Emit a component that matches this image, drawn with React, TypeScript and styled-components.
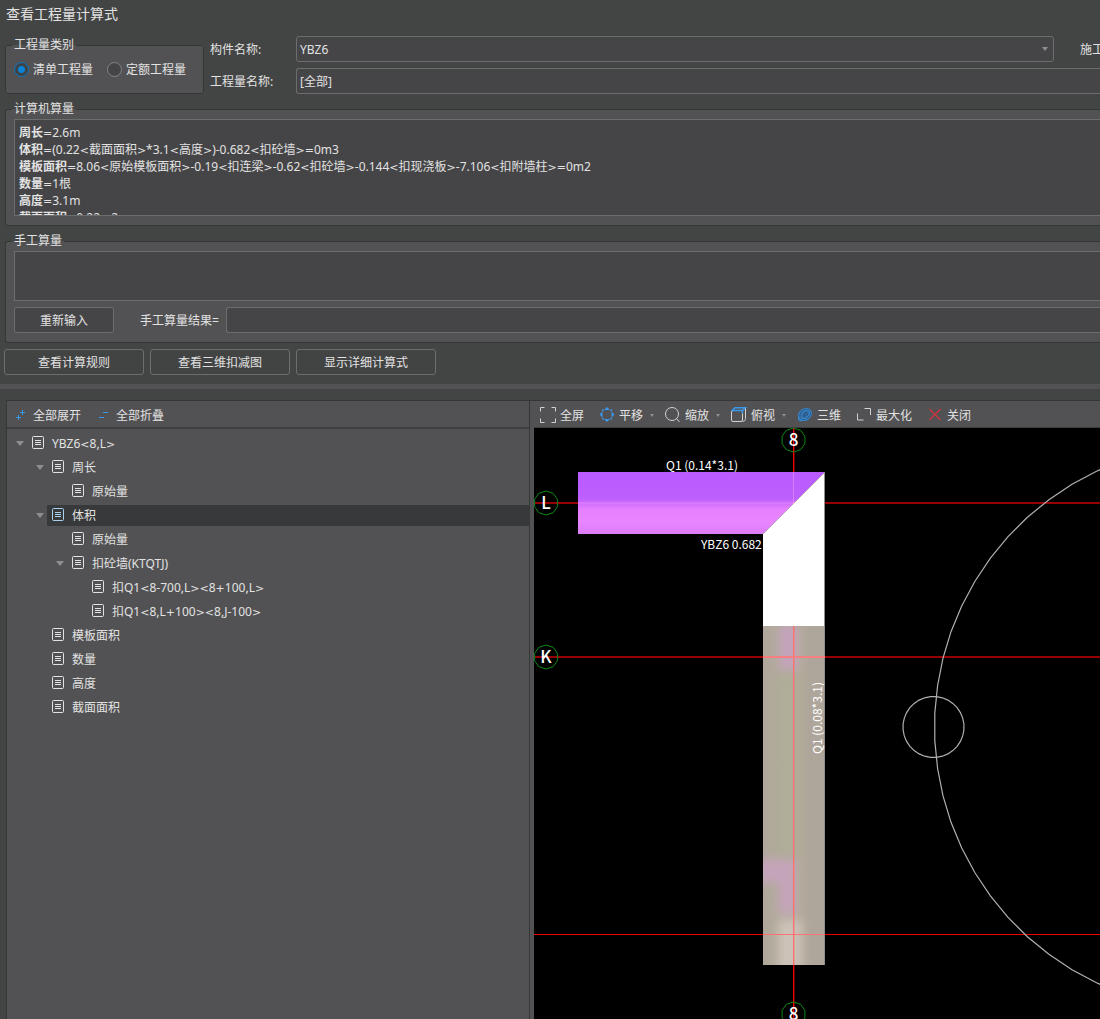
import React from "react";
import styled, { createGlobalStyle, css } from "styled-components";

const GlobalStyle = createGlobalStyle`
  *, *::before, *::after { box-sizing: border-box; }
  body {
    margin: 0;
    background: #434544;
    color: #e2e2e2;
    font: 12px/16px "Noto Sans", "Noto Sans CJK SC", sans-serif;
    overflow-x: hidden;
  }
  button, input, select, textarea { font: inherit; color: inherit; }
`;

const line = "#6c6e6e";
const edge = "#353736";
const fieldBg = "#454547";
const panelBg = "#525254";

const Window = styled.main`
  display: flex;
  flex-direction: column;
  min-height: 100vh;
`;

const Title = styled.h1`
  margin: 0;
  padding: 0 6px;
  height: 36px;
  font-size: 14px;
  font-weight: 400;
  line-height: 28px;
`;

const Form = styled.form`
  display: flex;
  flex-direction: column;
  padding: 0 0 9px 5px;
`;

const Header = styled.div`
  display: flex;
  align-items: flex-end;
  gap: 6px;
`;

const Group = styled.fieldset<{ $open?: boolean }>`
  min-width: 0;
  margin: 0;
  padding: 0 17px 9px 8px;
  border: 1px solid ${edge};
  border-radius: 3px;
  background: ${panelBg};
  ${(p) =>
    p.$open &&
    css`
      margin-top: 7px;
      padding: 1px 0 9px 8px;
      border-right: 0;
      border-radius: 3px 0 0 3px;
    `}
`;

const Legend = styled.legend`
  margin-left: -2px;
  padding: 0 2px 2px;
  line-height: 15px;
`;

const Radios = styled.div`
  display: flex;
  align-items: center;
  gap: 14px;
  height: 30px;
`;

const RadioLabel = styled.label`
  display: flex;
  align-items: center;
  gap: 4px;
  white-space: nowrap;
`;

const Text = styled.span`
  padding-top: 2px;
`;

const Radio = styled.input.attrs({ type: "radio" })`
  appearance: none;
  width: 15px;
  height: 15px;
  margin: 0;
  border: 1px solid #858585;
  border-radius: 50%;
  background: ${fieldBg};
  &:checked {
    border-color: #0a78c4;
    background: radial-gradient(circle, #0a84d8 3px, #3f4345 4px);
  }
`;

const Fields = styled.div`
  flex: 1;
  min-width: 0;
  display: flex;
  flex-direction: column;
  gap: 6px;
`;

const FieldRow = styled.div`
  display: flex;
  align-items: center;
`;

const FieldLabel = styled.label`
  flex: 0 0 86px;
  padding-top: 2px;
`;

const Cut = styled.span`
  flex: 0 0 46px;
  padding: 2px 0 0 26px;
  overflow: hidden;
  white-space: nowrap;
`;

const SelectBox = styled.span<{ $open?: boolean }>`
  position: relative;
  flex: 1;
  min-width: 0;
  display: flex;
  select {
    appearance: none;
    width: 100%;
    height: 26px;
    padding: 2px 3px 0;
    border: 1px solid ${line};
    border-radius: 3px;
    background: ${fieldBg};
    ${(p) => p.$open && "border-right: 0; border-radius: 3px 0 0 3px;"}
  }
`;

const Caret = styled.i<{ $over?: boolean; $size?: number }>`
  width: 0;
  height: 0;
  border: ${(p) => p.$size ?? 3}px solid transparent;
  border-top: ${(p) => (p.$size ?? 3) + 1}px solid #8f8f8f;
  border-bottom: 0;
  ${(p) => p.$over && "position: absolute; right: 6px; top: 11px;"}
`;

const Report = styled.div`
  height: 97px;
  padding: 4px;
  border: 1px solid ${line};
  border-right: 0;
  background: ${fieldBg};
  overflow: hidden;
`;

const ReportLine = styled.p`
  margin: 0;
  line-height: 17px;
  white-space: nowrap;
`;

const Symbol = styled.span`
  font-family: "DejaVu Sans", sans-serif;
  font-size: 11px;
  line-height: 1px;
`;

const Manual = styled.textarea`
  display: block;
  width: 100%;
  height: 50px;
  padding: 4px;
  border: 1px solid ${line};
  border-right: 0;
  background: ${fieldBg};
  resize: none;
`;

const ManualRow = styled.div`
  display: flex;
  align-items: center;
  gap: 7px;
  margin-top: 6px;
`;

const ResultLabel = styled.label`
  margin-left: 19px;
  padding-top: 2px;
`;

const Result = styled.input`
  flex: 1;
  min-width: 0;
  height: 26px;
  border: 1px solid ${line};
  border-right: 0;
  border-radius: 3px 0 0 3px;
  background: ${fieldBg};
`;

const Button = styled.button<{ $wide?: boolean }>`
  width: ${(p) => (p.$wide ? 140 : 100)}px;
  height: 26px;
  padding: 2px 0 0;
  border: 1px solid ${line};
  border-radius: 3px;
  background: ${(p) => (p.$wide ? "#424443" : fieldBg)};
`;

const Actions = styled.div`
  display: flex;
  gap: 6px;
  margin: 6px 0 0 -1px;
`;

const Splitter = styled.div`
  height: 5px;
  background: ${panelBg};
`;

const Body = styled.div`
  flex: 1;
  display: grid;
  grid-template-columns: 524px 4px minmax(0, 1fr);
  padding: 11px 0 0 6px;
`;

const TreePanel = styled.section`
  display: flex;
  flex-direction: column;
  border: 1px solid ${edge};
  border-bottom: 0;
  background: ${panelBg};
`;

const Divider = styled.div`
  border-top: 1px solid ${edge};
  background: ${panelBg};
`;

const ViewPanel = styled.section`
  display: flex;
  flex-direction: column;
  min-width: 0;
  border-top: 1px solid ${edge};
  background: #000;
`;

const Toolbar = styled.div<{ $tree?: boolean }>`
  display: flex;
  align-items: center;
  gap: ${(p) => (p.$tree ? 18 : 11)}px;
  height: ${(p) => (p.$tree ? 28 : 27)}px;
  padding: 0 8px;
  padding-left: ${(p) => (p.$tree ? 9 : 6)}px;
  border-bottom: ${(p) => (p.$tree ? 2 : 1)}px solid #3d3f3f;
  background: ${panelBg};
`;

const Tool = styled.button<{ $gap: number; $plain?: boolean }>`
  display: flex;
  align-items: center;
  gap: ${(p) => p.$gap}px;
  padding: 2px 0 0;
  padding-right: ${(p) => (p.$plain ? 4 : 0)}px;
  border: 0;
  background: none;
  white-space: nowrap;
  svg { display: block; flex: none; }
  i { margin-left: 3px; }
`;

const Tree = styled.ul`
  margin: 0;
  padding: 2px 0 0;
  list-style: none;
`;

const Node = styled.li<{ $level: number }>`
  display: flex;
  align-items: center;
  height: 24px;
  padding-left: ${(p) => 9 + p.$level * 20}px;
`;

const Twist = styled.span`
  flex: 0 0 11px;
  display: flex;
`;

const NodeLabel = styled.span<{ $selected?: boolean }>`
  flex: 1;
  display: flex;
  align-items: center;
  gap: 8px;
  height: 21px;
  padding-left: 5px;
  color: #e2e2e2;
  background: ${(p) => (p.$selected ? "#38393a" : "none")};
  svg { color: ${(p) => (p.$selected ? "#a9d0f0" : "#e2e2e2")}; }
`;

const Canvas = styled.svg`
  display: block;
  flex: 1;
  width: 100%;
  min-height: 560px;
  font-family: "Noto Sans CJK SC", sans-serif;
  font-size: 12px;
  fill: #fff;
`;

/* Operators and angle brackets are set wider than the digits around them. */
const Expr = ({ children }: { children: string }) => (
  <Text>
    {children
      .split(/([<>=+]+)/)
      .map((s, i) => (i % 2 ? <Symbol key={i}>{s}</Symbol> : s))}
  </Text>
);

const report: [string, string][] = [
  ["周长", "=2.6m"],
  ["体积", "=(0.22<截面面积>*3.1<高度>)-0.682<扣砼墙>=0m3"],
  ["模板面积", "=8.06<原始模板面积>-0.19<扣连梁>-0.62<扣砼墙>-0.144<扣现浇板>-7.106<扣附墙柱>=0m2"],
  ["数量", "=1根"],
  ["高度", "=3.1m"],
  ["截面面积", "=0.22m2"],
];

const nodes: { level: number; text: string; open?: boolean; selected?: boolean }[] = [
  { level: 0, text: "YBZ6<8,L>", open: true },
  { level: 1, text: "周长", open: true },
  { level: 2, text: "原始量" },
  { level: 1, text: "体积", open: true, selected: true },
  { level: 2, text: "原始量" },
  { level: 2, text: "扣砼墙(KTQTJ)", open: true },
  { level: 3, text: "扣Q1<8-700,L><8+100,L>" },
  { level: 3, text: "扣Q1<8,L+100><8,J-100>" },
  { level: 1, text: "模板面积" },
  { level: 1, text: "数量" },
  { level: 1, text: "高度" },
  { level: 1, text: "截面面积" },
];

const DocIcon = () => (
  <svg width="12" height="14" viewBox="0 0 12 14" fill="none" stroke="currentColor">
    <rect x="0.5" y="0.5" width="11" height="12" rx="1" />
    <path d="M3 4.5h6M3 6.5h6M3 8.5h6" />
  </svg>
);

const blue = "#3b97ea";
const grey = "#d2d2d2";

const icons = {
  full: (
    <path
      stroke={grey}
      d="M.5 4.500v-4h4M11.500.5h4v4M15.500 11.500v4h-4M4.500 15.500h-4v-4"
    />
  ),
  pan: (
    <>
      <path fill={blue} d="M8 0l3 3H5zM8 15l3-3H5zM.5 7.500l3-3v6zM15.500 7.500l-3-3v6z" />
      <path fill={blue} d="M3 2.500h2v1H4v1H3zM13 2.500h-2v1h1v1h1zM3 12.500h2v-1H4v-1H3zM13 12.500h-2v-1h1v-1h1z" />
    </>
  ),
  zoom: (
    <>
      <circle cx="7" cy="7" r="6.500" stroke={grey} />
      <path stroke={grey} d="M11.500 11.500l3 3.500" />
    </>
  ),
  view: (
    <>
      <rect x="0.5" y="3.500" width="11" height="11" rx="1.500" stroke={grey} />
      <path stroke={grey} d="M11.500 14.500c2 0 3-1.500 3-3V1" />
      <path stroke={blue} strokeWidth="1.400" d="M1 3.500L4 .7h10.500l-3 2.800zM11.500 3.500v3" />
    </>
  ),
  solid: (
    <>
      <ellipse cx="8" cy="7.500" rx="7" ry="5.500" stroke="#3385d0" fill="#2f6293" transform="rotate(-35 8 7.500)" />
      <path stroke="#3b8fdd" d="M5.500 5.500L9 3.500l3.500 1-.5 3.500-3 3-4 .5-.5-3zM2 10l-.5 3 3.500 1" />
    </>
  ),
  max: <path stroke={grey} d="M1.500 6.500v6.500h6M8.500 1.500h6v6.500" />,
  close: <path stroke="#d3333d" strokeWidth="1.200" d="M2.500 2l11 11M13.500 2l-11 11" />,
};

const tools: { icon: keyof typeof icons; text: string; menu?: boolean }[] = [
  { icon: "full", text: "全屏" },
  { icon: "pan", text: "平移", menu: true },
  { icon: "zoom", text: "缩放", menu: true },
  { icon: "view", text: "俯视", menu: true },
  { icon: "solid", text: "三维" },
  { icon: "max", text: "最大化" },
  { icon: "close", text: "关闭" },
];

/* Regular polygon with a flat side facing left, as the CAD view tessellates arcs. */
const ring = (cx: number, cy: number, r: number, n: number) =>
  Array.from({ length: n }, (_, i) => {
    const a = ((i + 0.5) * 2 * Math.PI) / n;
    return `${(cx + r * Math.cos(a)).toFixed(1)},${(cy + r * Math.sin(a)).toFixed(1)}`;
  }).join(" ");

const Axis = ({ x, y, name }: { x: number; y: number; name: string }) => (
  <g>
    <polygon points={ring(x, y, 12, 10)} fill="none" stroke="#0a8a14" />
    <text x={x} y={y + 6} fontSize="17" fontWeight="500" textAnchor="middle">
      {name}
    </text>
  </g>
);

const Drawing = () => (
  <Canvas role="img" aria-label="俯视图">
    <defs>
      <linearGradient id="wall" x1="0" y1="0" x2="0" y2="1">
        <stop offset="0" stopColor="#b95bff" />
        <stop offset="0.420" stopColor="#bd5efe" />
        <stop offset="0.600" stopColor="#e680ff" />
        <stop offset="0.800" stopColor="#e985ff" />
        <stop offset="1" stopColor="#dd7cf8" />
      </linearGradient>
      <linearGradient id="column">
        <stop offset="0" stopColor="#b1a79d" />
        <stop offset="0.350" stopColor="#b0ad98" />
        <stop offset="0.600" stopColor="#b1ab99" />
        <stop offset="0.750" stopColor="#afa69b" />
        <stop offset="1" stopColor="#afa69b" />
      </linearGradient>
      <filter id="soft" x="-50%" y="-50%" width="200%" height="200%">
        <feGaussianBlur stdDeviation="5" />
      </filter>
      <clipPath id="columnClip">
        <rect x="229" y="198" width="62" height="339" />
      </clipPath>
    </defs>
    <rect x="0" y="74" width="100%" height="2" fill="#960000" />
    <rect x="0" y="228" width="100%" height="2" fill="#960000" />
    <rect x="0" y="506" width="100%" height="1" fill="#f00000" />
    <rect x="259" y="0" width="1.400" height="100%" fill="#f00000" />
    <polygon points="44,44 291,44 229,106 44,106" fill="url(#wall)" />
    <path d="M44 75h216M259.500 44v31" stroke="#f3a0ff" strokeOpacity="0.500" />
    <polygon points="291,44 291,198 229,198 229,106" />
    <rect x="229" y="198" width="62" height="339" fill="url(#column)" />
    <g clipPath="url(#columnClip)">
      <g filter="url(#soft)">
        <rect x="245" y="196" width="19" height="46" fill="#c4a3bb" />
        <path d="M222 431h40v56h-18v-32h-22z" fill="#c4a4ba" />
        <rect x="244" y="492" width="24" height="52" fill="#cdc2b9" />
      </g>
    </g>
    <path d="M290.500 44v493" stroke="#8e8e8e" />
    <rect x="259" y="198" width="1.400" height="339" fill="#ff7272" />
    <rect x="229" y="228" width="62" height="2" fill="#f98080" />
    <rect x="229" y="506" width="62" height="1" fill="#ff7272" />
    <text x="132" y="42">Q1 (0.14*3.1)</text>
    <text x="167" y="121">YBZ6 0.682</text>
    <text transform="translate(288 326) rotate(-90)">Q1 (0.08*3.1)</text>
    <g fill="none" stroke="#b0b0b0" strokeWidth="1.200">
      <polygon points={ring(683.5, 299, 283, 64)} />
      <polygon points={ring(399.5, 299, 30.5, 32)} />
    </g>
    <Axis x={259.5} y={12} name="8" />
    <Axis x={12} y={75} name="L" />
    <Axis x={12} y={229} name="K" />
    <Axis x={259.5} y={586} name="8" />
  </Canvas>
);

export default function App() {
  return (
    <Window>
      <GlobalStyle />
      <Title>查看工程量计算式</Title>
      <Form onSubmit={(e) => e.preventDefault()}>
        <Header>
          <Group>
            <Legend>工程量类别</Legend>
            <Radios>
              <RadioLabel>
                <Radio name="kind" defaultChecked />
                <Text>清单工程量</Text>
              </RadioLabel>
              <RadioLabel>
                <Radio name="kind" />
                <Text>定额工程量</Text>
              </RadioLabel>
            </Radios>
          </Group>
          <Fields>
            <FieldRow>
              <FieldLabel htmlFor="part">构件名称:</FieldLabel>
              <SelectBox>
                <select id="part">
                  <option>YBZ6</option>
                </select>
                <Caret $over $size={3} />
              </SelectBox>
              <Cut>施工</Cut>
            </FieldRow>
            <FieldRow>
              <FieldLabel htmlFor="quantity">工程量名称:</FieldLabel>
              <SelectBox $open>
                <select id="quantity">
                  <option>[全部]</option>
                </select>
              </SelectBox>
            </FieldRow>
          </Fields>
        </Header>

        <Group $open>
          <Legend>计算机算量</Legend>
          <Report>
            {report.map(([name, value]) => (
              <ReportLine key={name}>
                <b>{name}</b>
                <Expr>{value}</Expr>
              </ReportLine>
            ))}
          </Report>
        </Group>

        <Group $open>
          <Legend>手工算量</Legend>
          <Manual aria-label="手工算量" />
          <ManualRow>
            <Button type="reset">重新输入</Button>
            <ResultLabel htmlFor="result">手工算量结果=</ResultLabel>
            <Result id="result" />
          </ManualRow>
        </Group>

        <Actions>
          <Button type="button" $wide>查看计算规则</Button>
          <Button type="button" $wide>查看三维扣减图</Button>
          <Button type="button" $wide>显示详细计算式</Button>
        </Actions>
      </Form>

      <Splitter />

      <Body>
        <TreePanel>
          <Toolbar $tree>
            <Tool type="button" $gap={7}>
              <svg width="10" height="10" stroke={blue}>
                <path d="M0 7.500h5M2.500 5v5M4 2.500h5M6.500 0v5" />
              </svg>
              <Text>全部展开</Text>
            </Tool>
            <Tool type="button" $gap={7}>
              <svg width="10" height="10" stroke={blue}>
                <path d="M0 7.500h5M4 2.500h5" />
              </svg>
              <Text>全部折叠</Text>
            </Tool>
          </Toolbar>
          <Tree role="tree">
            {nodes.map((n, i) => (
              <Node key={i} $level={n.level} role="treeitem" aria-level={n.level + 1} aria-selected={!!n.selected}>
                <Twist>{n.open && <Caret $size={4} />}</Twist>
                <NodeLabel $selected={n.selected}>
                  <DocIcon />
                  <Expr>{n.text}</Expr>
                </NodeLabel>
              </Node>
            ))}
          </Tree>
        </TreePanel>
        <Divider />
        <ViewPanel>
          <Toolbar>
            {tools.map((t) => (
              <Tool key={t.text} type="button" $gap={4} $plain={!t.menu}>
                <svg width="16" height="16" viewBox="0 0 16 16" fill="none">
                  {icons[t.icon]}
                </svg>
                <Text>{t.text}</Text>
                {t.menu && <Caret $size={2} />}
              </Tool>
            ))}
          </Toolbar>
          <Drawing />
        </ViewPanel>
      </Body>
    </Window>
  );
}
